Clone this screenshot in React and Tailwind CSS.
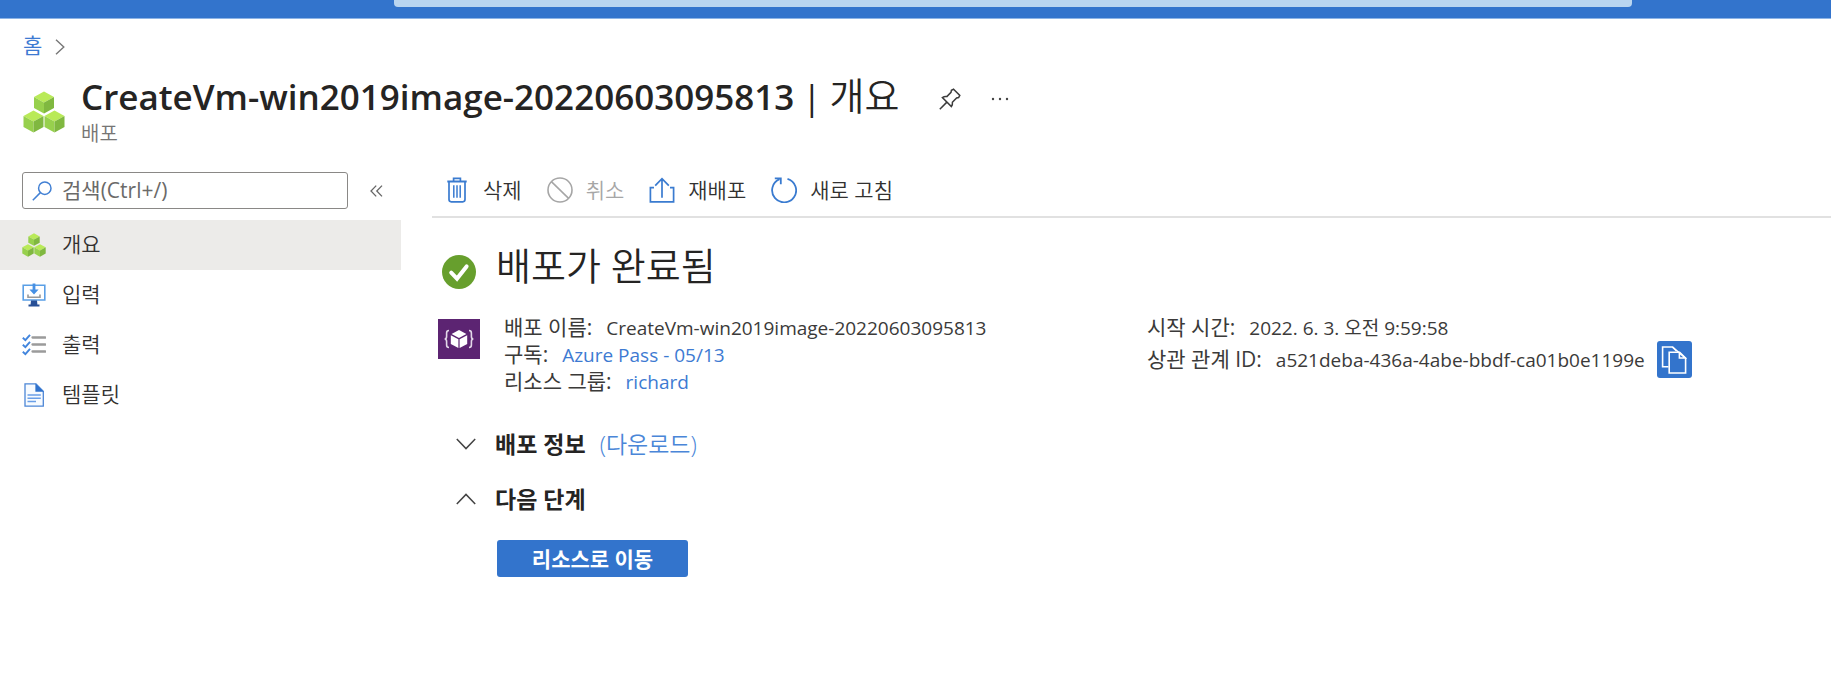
import React, { useState } from 'react';

const CubesIcon = ({ className }) => (
  <svg viewBox="0 0 42 42" className={className} aria-hidden="true">
    {[[21, 0], [10.5, 19], [31.5, 19]].map(([x, y]) => (
      <g key={x} transform={`translate(${x} ${y})`}>
        <path d="M0 0.5 L10 6 L0 11.5 L-10 6 Z" fill="#b9ea58" />
        <path d="M-10 6 L0 11.5 V22.5 L-10 17 Z" fill="#97d04d" />
        <path d="M10 6 L0 11.5 V22.5 L10 17 Z" fill="#80b840" />
      </g>
    ))}
  </svg>
);

const InputsIcon = () => (
  <svg viewBox="0 0 24 24" className="size-6" aria-hidden="true">
    <path d="M1.2 2.2 H22.8 V17 H1.2 Z" fill="#fff" stroke="#5a9fe6" strokeWidth="1.6" />
    <path d="M9 17.5 H15 L15.4 21.5 H17.5 V23.5 H6.5 V21.5 H8.6 Z" fill="#274f96" />
    <path d="M10.6 0.5 H13.4 V6.5 H16.6 L12 11.5 L7.4 6.5 H10.6 Z" fill="#4690e4" />
    <path d="M6 11.5 V14.2 H18 V11.5" fill="none" stroke="#9a9a9a" strokeWidth="1.6" />
  </svg>
);

const OutputsIcon = () => (
  <svg viewBox="0 0 24 24" className="size-6" aria-hidden="true">
    {[4.5, 11.5, 18.5].map((y) => (
      <g key={y} fill="none">
        <path d={`M0.8 ${y + 0.2} L3.4 ${y + 2.6} L8 ${y - 2.6}`} stroke="#4285dd" strokeWidth="1.9" />
        <path d={`M10.5 ${y} H23.2`} stroke="#9b9b9b" strokeWidth="2.3" strokeLinecap="round" />
      </g>
    ))}
  </svg>
);

const TemplateIcon = () => (
  <svg viewBox="0 0 24 24" className="size-6" aria-hidden="true">
    <path d="M3 0.9 H14 L21.3 8.2 V23.1 H3 Z" fill="#f7fbff" stroke="#4c86d6" strokeWidth="1.3" />
    <path d="M13.4 0.6 L21.8 8.8 H13.4 Z" fill="#2f72cd" />
    <path d="M5.5 12 H18.8 M5.5 15.2 H18.8 M5.5 18.4 H14" stroke="#6a9fe8" strokeWidth="1.5" />
  </svg>
);

const TrashIcon = () => (
  <svg viewBox="0 0 20 26" className="h-[26px] w-5" fill="none" stroke="#3a7bd0" strokeWidth="1.7" aria-hidden="true">
    <path d="M0.3 4.5 H19.7" strokeWidth="2" />
    <path d="M6.6 4.2 V1.4 H13.4 V4.2" />
    <path d="M2 4.8 V22.6 Q2 24.8 4.2 24.8 H15.8 Q18 24.8 18 22.6 V4.8" />
    <path d="M6.8 8.2 V20.8 M10 8.2 V20.8 M13.2 8.2 V20.8" strokeWidth="1.5" />
  </svg>
);

const CancelIcon = () => (
  <svg viewBox="0 0 26 26" className="size-[26px]" fill="none" stroke="#a6a6a6" strokeWidth="1.6" aria-hidden="true">
    <circle cx="13" cy="13" r="12" />
    <path d="M4.4 4.6 L21.6 21.4" />
  </svg>
);

const RedeployIcon = () => (
  <svg viewBox="0 0 26 26" className="size-[26px]" fill="none" stroke="#3a7bd0" strokeWidth="1.7" aria-hidden="true">
    <path d="M5 10.6 H1.4 V24.8 H24.6 V10.6 H21" />
    <path d="M13 20.8 V1.8 M6.2 8.6 L13 1.6 L19.8 8.6" />
  </svg>
);

const RefreshIcon = () => (
  <svg viewBox="0 0 26 26" className="size-[26px]" fill="none" stroke="#3a7bd0" strokeWidth="1.8" aria-hidden="true">
    <path d="M16.5 1.8 A12 12 0 1 1 8.6 2.2" />
    <path d="M3.8 1.4 H9.8 V7.2" />
  </svg>
);

const PinIcon = () => (
  <svg viewBox="0 0 22 22" className="size-[22px]" fill="none" stroke="#3c3c3c" strokeWidth="1.5" aria-hidden="true">
    <path d="M14.6 1.2 L20.8 7.4 L19.6 9.6 L17.6 10 L13.4 14.2 Q13.8 16.8 12.4 18.6 L3.4 9.6 Q5.4 8.2 7.8 8.6 L12 4.4 L12.4 2.2 Z" />
    <path d="M7.9 14.1 L0.8 21.2" />
  </svg>
);

const Chevron = ({ d, className }) => (
  <svg viewBox="0 0 20 12" className={className} fill="none" stroke="#444" strokeWidth="1.5" aria-hidden="true">
    <path d={d} />
  </svg>
);

const ResourceIcon = () => (
  <svg viewBox="0 0 42 40" className="mt-[5px] h-10 w-[42px] shrink-0" aria-hidden="true">
    <rect width="42" height="40" fill="#5c2472" />
    <g fill="none" stroke="#e3d8e8" strokeWidth="1.6">
      <path d="M11 11.5 Q8.6 11.5 8.6 14 V17.5 Q8.6 20 6.6 20 Q8.6 20 8.6 22.5 V26 Q8.6 28.5 11 28.5" />
      <path d="M31 11.5 Q33.4 11.5 33.4 14 V17.5 Q33.4 20 35.4 20 Q33.4 20 33.4 22.5 V26 Q33.4 28.5 31 28.5" />
    </g>
    <path d="M21 11 L28.4 15 L21 19 L13.6 15 Z" fill="#fff" />
    <path d="M12.8 16.2 L20.4 20.2 V29 L12.8 25 Z" fill="#fff" />
    <path d="M29.2 16.2 L21.6 20.2 V29 L29.2 25 Z" fill="#fff" />
  </svg>
);

const menu = [
  { label: '개요', icon: <CubesIcon className="size-6" />, active: true },
  { label: '입력', icon: <InputsIcon /> },
  { label: '출력', icon: <OutputsIcon /> },
  { label: '템플릿', icon: <TemplateIcon /> },
];

const Header = () => (
  <header>
    <div className="flex h-[19px] border-b border-[#8db4e6] bg-[#3374cc] pr-[199px] pl-[394px]">
      <div className="h-[7px] flex-1 rounded-b-sm bg-[#b9d5f0]" />
    </div>
    <nav className="flex items-center gap-[13px] pt-[14px] pl-[23px]">
      <a href="#home" className="text-[21px] leading-6 text-[#3d7ad2]">홈</a>
      <svg viewBox="0 0 10 16" className="mt-1 h-4 w-[10px]" fill="none" stroke="#777" strokeWidth="1.4" aria-hidden="true">
        <path d="M1 0.8 L8.8 8 L1 15.2" />
      </svg>
    </nav>
    <div className="flex gap-4 pt-[17px] pl-[23px]">
      <CubesIcon className="mt-[17px] size-[42px] shrink-0" />
      <div>
        <div className="flex items-center">
          <h1 className="flex items-baseline gap-2 text-[#252423]">
            <span className="text-[35px] leading-[42px] font-semibold">CreateVm-win2019image-20220603095813</span>
            <span className="text-[35px] leading-[42px]">|</span>
            <span className="text-[38px] leading-[42px] font-[350]">개요</span>
          </h1>
          <button type="button" aria-label="고정" className="mt-[6px] ml-10"><PinIcon /></button>
          <button type="button" aria-label="더 보기" className="mt-[6px] ml-[30px]">
            <svg viewBox="0 0 18 4" className="h-1 w-[18px]" fill="#444" aria-hidden="true">
              <circle cx="2" cy="2" r="1.2" /><circle cx="9" cy="2" r="1.2" /><circle cx="16" cy="2" r="1.2" />
            </svg>
          </button>
        </div>
        <p className="mt-1 text-[20px] leading-6 font-[350] text-[#767574]">배포</p>
      </div>
    </div>
  </header>
);

const Sidebar = () => {
  const [filtro, setFiltro] = useState('');

  return (
    <aside className="w-[401px] shrink-0">
      <div className="flex items-center gap-[22px] pl-[22px]">
        <label className="flex h-[37px] w-[326px] items-center gap-[10px] rounded-[3px] border border-[#8a8886] pl-[9px]">
          <svg viewBox="0 0 20 20" className="size-5" fill="none" stroke="#4280d4" strokeWidth="1.5" aria-hidden="true">
            <circle cx="12.8" cy="7.2" r="6.2" />
            <path d="M8.4 11.6 L0.8 19.2" />
          </svg>
          <input
            type="text"
            value={filtro}
            onChange={(e) => setFiltro(e.target.value)}
            placeholder="검색(Ctrl+/)"
            aria-label="검색"
            className="min-w-0 flex-1 text-[21px] outline-none placeholder:text-[#6b6a69]"
          />
        </label>
        <button type="button" aria-label="메뉴 접기">
          <svg viewBox="0 0 13 12" className="h-3 w-[13px]" fill="none" stroke="#666" strokeWidth="1.3" aria-hidden="true">
            <path d="M6.2 0.6 L1 6 L6.2 11.4 M12 0.6 L6.8 6 L12 11.4" />
          </svg>
        </button>
      </div>
      <nav className="mt-[11px]">
        {menu.map((item) => (
          <a
            key={item.label}
            href="#menu"
            className={`flex h-[50px] items-center gap-4 pl-[22px] text-[21px] font-[350] text-[#323130] ${item.active ? 'bg-[#ecebe9]' : ''}`}
          >
            {item.icon}
            {item.label}
          </a>
        ))}
      </nav>
    </aside>
  );
};

const Toolbar = () => (
  <div className="ml-[31px] flex items-center gap-[25px] border-b-2 border-[#e1e1e1] pb-2 pl-[15px] text-[21px] leading-9 font-[350] text-[#323130]">
    <button type="button" className="flex items-center gap-4"><TrashIcon />삭제</button>
    <button type="button" disabled className="flex items-center gap-[13px] text-[#a6a6a6]"><CancelIcon />취소</button>
    <button type="button" className="flex items-center gap-[13px]"><RedeployIcon />재배포</button>
    <button type="button" className="flex items-center gap-[13px]"><RefreshIcon />새로 고침</button>
  </div>
);

const Field = ({ label, children }) => (
  <div className="flex items-baseline gap-[14px]">
    <dt className="text-[21px]">{label}:</dt>
    <dd className="text-[19px]">{children}</dd>
  </div>
);

const Details = () => (
  <div className="mt-6 flex text-[#3b3a39]">
    <ResourceIcon />
    <dl className="ml-6 w-[643px] leading-[26px]">
      <Field label="배포 이름">CreateVm-win2019image-20220603095813</Field>
      <Field label="구독">
        <a href="#subscription" className="text-[#3d7ad2]">Azure Pass - 05/13</a>
      </Field>
      <Field label="리소스 그룹">
        <a href="#group" className="text-[#3d7ad2]">richard</a>
      </Field>
    </dl>
    <div className="flex items-end gap-3 self-start">
      <dl className="leading-[26px]">
        <Field label="시작 시간">2022. 6. 3. 오전 9:59:58</Field>
        <div className="py-[5px]">
          <Field label="상관 관계 ID">a521deba-436a-4abe-bbdf-ca01b0e1199e</Field>
        </div>
      </dl>
      <button type="button" aria-label="복사" className="flex h-[37px] w-[35px] items-center justify-center rounded-[3px] bg-[#3374cc]">
        <svg viewBox="0 0 26 28" className="h-7 w-[26px]" fill="none" stroke="#fff" strokeWidth="1.6" aria-hidden="true">
          <path d="M7.5 20.8 H1.6 V1 H11.5 L15.5 5" />
          <path d="M8.2 6.2 H18.6 L24.6 12 V27 H8.2 Z" />
          <path d="M11.5 1 L24.2 12 H18.4 V6.4" />
        </svg>
      </button>
    </div>
  </div>
);

const App = () => (
  <div className="min-h-screen bg-white font-['Open_Sans','Noto_Sans_CJK_KR',sans-serif]">
    <Header />
    <div className="flex pt-[26px]">
      <Sidebar />
      <main className="min-w-0 flex-1">
        <Toolbar />
        <div className="pl-[37px]">
          <div className="flex items-center gap-5 pt-[22px] pl-1">
            <svg viewBox="0 0 34 34" className="mt-[14px] size-[34px]" aria-hidden="true">
              <circle cx="17" cy="17" r="17" fill="#679f2d" />
              <path d="M9.2 17.6 L15 23.6 L24.6 11.4" fill="none" stroke="#fff" strokeWidth="4" strokeLinecap="round" />
            </svg>
            <h2 className="text-[38px] leading-[50px] font-[350] text-[#252423]">배포가 완료됨</h2>
          </div>
          <Details />
          <div className="mt-[34px] pl-[18px] text-[23px] leading-[30px] text-[#252423]">
            <div className="flex items-center">
              <button type="button" className="flex items-center gap-[19px] font-semibold">
                <Chevron d="M0.8 1 L10 10.6 L19.2 1" className="h-3 w-5" />
                배포 정보
              </button>
              <a href="#download" className="ml-[14px] font-[350] text-[#4a86d8]">(다운로드)</a>
            </div>
            <button type="button" className="mt-[25px] flex items-center gap-[19px] font-semibold">
              <Chevron d="M0.8 11 L10 1.4 L19.2 11" className="h-3 w-5" />
              다음 단계
            </button>
            <button type="button" className="mt-[26px] ml-[41px] h-[37px] w-[191px] rounded-[3px] bg-[#3374cc] text-[21px] leading-[30px] font-semibold text-white">
              리소스로 이동
            </button>
          </div>
        </div>
      </main>
    </div>
  </div>
);

export default App;
